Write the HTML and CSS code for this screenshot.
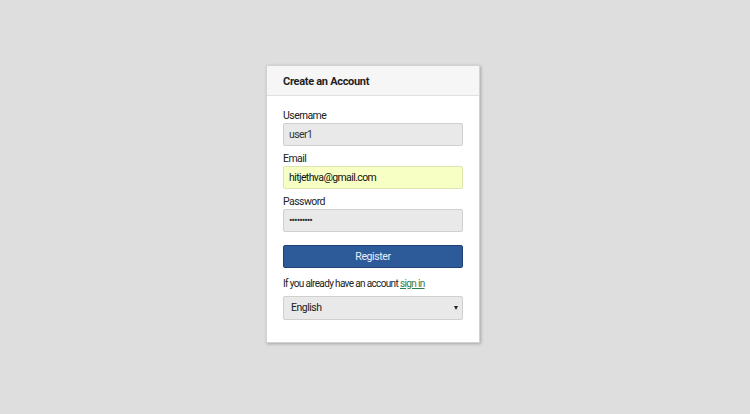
FILE: index.html
```html
<!DOCTYPE html>
<html lang="en">
<head>
<meta charset="utf-8">
<title>Create an Account</title>
<link rel="stylesheet" href="styles.css">
</head>
<body>
<main class="page">
  <section class="card">
    <header class="card-header">Create an Account</header>
    <form class="card-body">
      <label class="field-label" for="username">Username</label>
      <input class="field" id="username" type="text" value="user1">
      <label class="field-label" for="email">Email</label>
      <input class="field field-autofill" id="email" type="text" value="hitjethva@gmail.com">
      <label class="field-label" for="password">Password</label>
      <input class="field field-password" id="password" type="password" value="123456789">
      <button class="btn-register" type="button">Register</button>
      <p class="signin-text">If you already have an account <a href="#" class="signin-link">sign in</a></p>
      <div class="select-wrap">
        <select class="lang-select">
          <option>English</option>
        </select>
        <span class="select-arrow"></span>
      </div>
    </form>
  </section>
</main>
</body>
</html>
```
FILE: styles.css
```css
* { box-sizing: border-box; }
html, body { margin: 0; padding: 0; }
body {
  background: #dedede;
  font-family: Roboto, "Liberation Sans", sans-serif;
  color: #222;
  width: 750px;
  height: 414px;
  overflow: hidden;
}
.page {
  display: flex;
  justify-content: center;
  padding-top: 65px;
  padding-right: 4px;
}
.card {
  width: 214px;
  background: #fff;
  border: 1px solid #d2d2d2;
  box-shadow: 1px 1px 3px rgba(0,0,0,0.25);
}
.card-header {
  height: 30px;
  background: #f6f6f6;
  border-bottom: 1px solid #e0e0e0;
  padding: 1px 16px 0;
  display: flex;
  align-items: center;
  font-weight: 700;
  font-size: 11px;
  letter-spacing: -0.3px;
  color: #222;
}
.card-body {
  display: flex;
  flex-direction: column;
  padding: 12.5px 16px 22px;
  margin: 0;
}
.field-label {
  font-size: 10.5px;
  line-height: 13px;
  letter-spacing: -0.55px;
  color: #222;
  margin-bottom: 1.5px;
}
.field {
  height: 22.5px;
  border: 1px solid #cfcfcf;
  border-radius: 2px;
  background: #e9e9e9;
  padding: 0 5px;
  font-family: Roboto, "Liberation Sans", sans-serif;
  font-size: 10.5px;
  letter-spacing: -0.6px;
  color: #333;
  margin-bottom: 6px;
  outline: none;
}
.field-password {
  letter-spacing: -1px;
}
.field-autofill {
  background: #f7ffc4;
  border-color: #dde6b0;
  color: #111;
}
.btn-register {
  margin-top: 7.5px;
  height: 22.5px;
  background: #2d5b9a;
  border: 1px solid #1e4276;
  border-radius: 2px;
  color: #e8eef8;
  font-family: Roboto, "Liberation Sans", sans-serif;
  font-size: 10.5px;
  letter-spacing: -0.4px;
  padding: 0;
}
.signin-text {
  margin: 9px 0 0;
  font-size: 10px;
  line-height: 13px;
  letter-spacing: -0.65px;
  color: #222;
}
.signin-link {
  color: #2e7d4f;
  text-decoration: underline;
}
.select-wrap {
  position: relative;
  margin-top: 6.5px;
}
.lang-select {
  display: block;
  width: 100%;
  height: 23.5px;
  border: 1px solid #cfcfcf;
  border-radius: 2px;
  background: #e9e9e9;
  padding: 0 7px;
  font-family: Roboto, "Liberation Sans", sans-serif;
  font-size: 10.5px;
  letter-spacing: -0.5px;
  color: #222;
  appearance: none;
  -webkit-appearance: none;
  outline: none;
}
.select-arrow {
  position: absolute;
  right: 5px;
  top: 10px;
  width: 0;
  height: 0;
  border-left: 2.5px solid transparent;
  border-right: 2.5px solid transparent;
  border-top: 4px solid #222;
  pointer-events: none;
}
```
